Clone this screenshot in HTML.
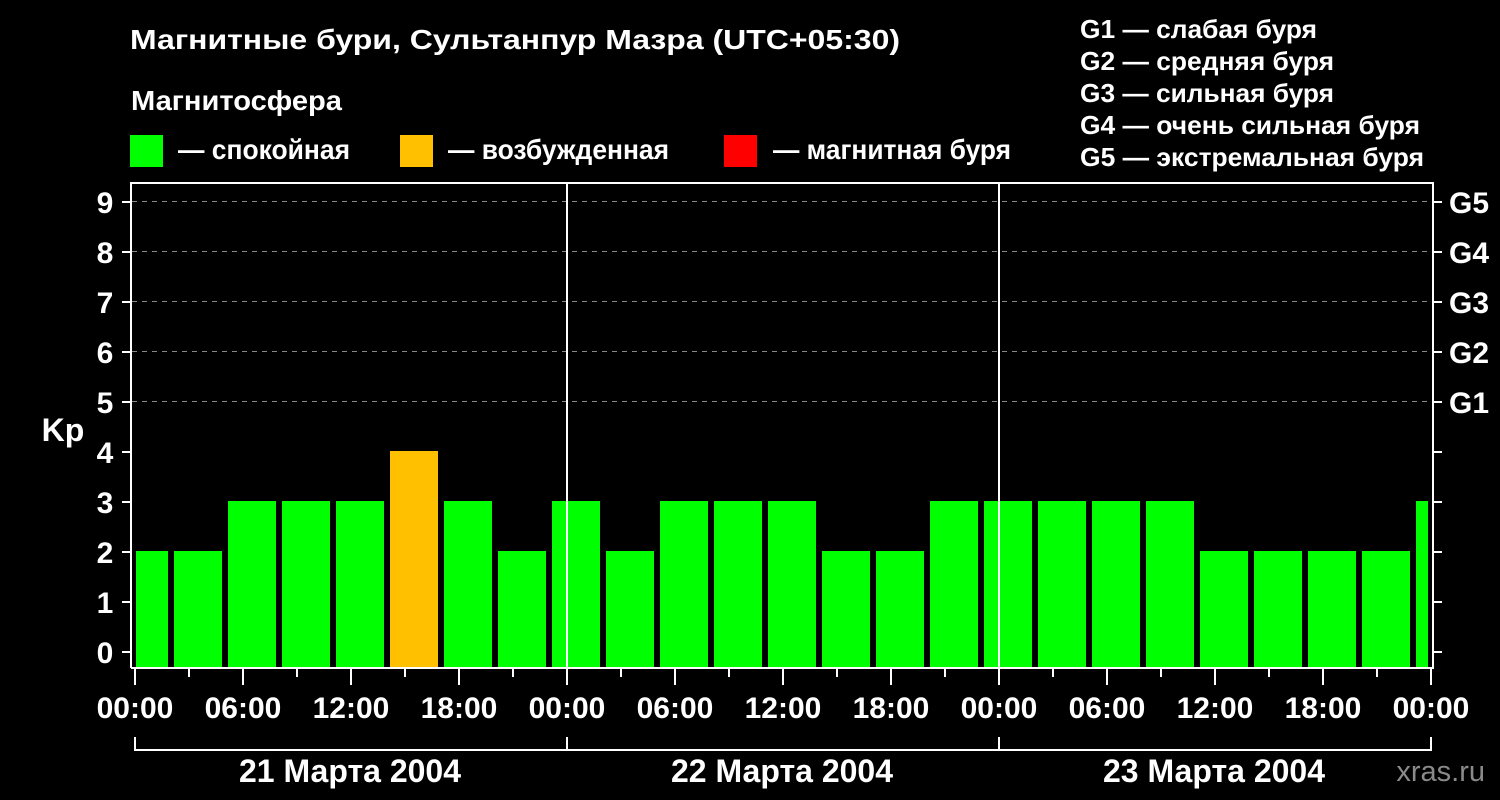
<!DOCTYPE html>
<html><head><meta charset="utf-8"><style>
html,body{margin:0;padding:0;background:#000;width:1500px;height:800px;overflow:hidden}
svg{display:block}
text{font-family:"Liberation Sans",Arial,sans-serif;font-weight:bold;fill:#fff}
</style></head><body>
<svg width="1500" height="800" viewBox="0 0 1500 800" xmlns="http://www.w3.org/2000/svg">
<rect width="1500" height="800" fill="#000"/>
<text x="130" y="49" font-size="28" textLength="770" lengthAdjust="spacingAndGlyphs">Магнитные бури, Сультанпур Мазра (UTC+05:30)</text>
<text x="131" y="110" font-size="28" textLength="211" lengthAdjust="spacingAndGlyphs">Магнитосфера</text>
<rect x="130" y="135" width="33" height="32" fill="#00ff00"/>
<text x="178" y="159" font-size="28" textLength="172" lengthAdjust="spacingAndGlyphs">— спокойная</text>
<rect x="400" y="135" width="33" height="32" fill="#ffc000"/>
<text x="448" y="159" font-size="28" textLength="221" lengthAdjust="spacingAndGlyphs">— возбужденная</text>
<rect x="724" y="135" width="33" height="32" fill="#ff0000"/>
<text x="773" y="159" font-size="28" textLength="238" lengthAdjust="spacingAndGlyphs">— магнитная буря</text>
<g font-size="26">
<text x="1080" y="38" textLength="237" lengthAdjust="spacingAndGlyphs">G1 — слабая буря</text>
<text x="1080" y="70" textLength="254" lengthAdjust="spacingAndGlyphs">G2 — средняя буря</text>
<text x="1080" y="102" textLength="254" lengthAdjust="spacingAndGlyphs">G3 — сильная буря</text>
<text x="1080" y="134" textLength="340" lengthAdjust="spacingAndGlyphs">G4 — очень сильная буря</text>
<text x="1080" y="166" textLength="344" lengthAdjust="spacingAndGlyphs">G5 — экстремальная буря</text>
</g>
<g stroke="#888" stroke-width="1" stroke-dasharray="5,5">
<line x1="132" y1="201.5" x2="1432" y2="201.5"/>
<line x1="132" y1="251.5" x2="1432" y2="251.5"/>
<line x1="132" y1="301.5" x2="1432" y2="301.5"/>
<line x1="132" y1="351.5" x2="1432" y2="351.5"/>
<line x1="132" y1="401.5" x2="1432" y2="401.5"/>
</g>
<g fill="#00ff00">
<rect x="136" y="551" width="32" height="117"/>
<rect x="174" y="551" width="48" height="117"/>
<rect x="228" y="501" width="48" height="167"/>
<rect x="282" y="501" width="48" height="167"/>
<rect x="336" y="501" width="48" height="167"/>
<rect x="390" y="451" width="48" height="217" fill="#ffc000"/>
<rect x="444" y="501" width="48" height="167"/>
<rect x="498" y="551" width="48" height="117"/>
<rect x="552" y="501" width="48" height="167"/>
<rect x="606" y="551" width="48" height="117"/>
<rect x="660" y="501" width="48" height="167"/>
<rect x="714" y="501" width="48" height="167"/>
<rect x="768" y="501" width="48" height="167"/>
<rect x="822" y="551" width="48" height="117"/>
<rect x="876" y="551" width="48" height="117"/>
<rect x="930" y="501" width="48" height="167"/>
<rect x="984" y="501" width="48" height="167"/>
<rect x="1038" y="501" width="48" height="167"/>
<rect x="1092" y="501" width="48" height="167"/>
<rect x="1146" y="501" width="48" height="167"/>
<rect x="1200" y="551" width="48" height="117"/>
<rect x="1254" y="551" width="48" height="117"/>
<rect x="1308" y="551" width="48" height="117"/>
<rect x="1362" y="551" width="48" height="117"/>
<rect x="1416" y="501" width="12" height="167"/>
</g>
<g stroke="#fff" stroke-width="2" fill="none">
<path d="M131 668 V183 H1433 V668 H131"/>
<line x1="567" y1="183" x2="567" y2="668"/>
<line x1="999" y1="183" x2="999" y2="668"/>
</g>
<g stroke="#fff" stroke-width="2">
<path d="M122 652H131M122 602H131M122 552H131M122 502H131M122 452H131M122 402H131M122 352H131M122 302H131M122 252H131M122 202H131"/>
<path d="M1433 652H1442M1433 602H1442M1433 552H1442M1433 502H1442M1433 452H1442M1433 402H1442M1433 352H1442M1433 302H1442M1433 252H1442M1433 202H1442"/>
<path d="M135 669V685M243 669V685M351 669V685M459 669V685M567 669V685M675 669V685M783 669V685M891 669V685M999 669V685M1107 669V685M1215 669V685M1323 669V685M1431 669V685"/>
<path d="M189 669V677M297 669V677M405 669V677M513 669V677M621 669V677M729 669V677M837 669V677M945 669V677M1053 669V677M1161 669V677M1269 669V677M1377 669V677"/>
<path d="M135 737V750H1431V737M567 737V750M999 737V750"/>
</g>
<g font-size="30" text-anchor="middle">
<text x="105" y="663">0</text><text x="105" y="613">1</text><text x="105" y="563">2</text><text x="105" y="513">3</text><text x="105" y="463">4</text><text x="105" y="413">5</text><text x="105" y="363">6</text><text x="105" y="313">7</text><text x="105" y="263">8</text><text x="105" y="213">9</text>
<text x="63" y="441" font-size="32">Kp</text>
</g>
<g font-size="30">
<text x="1449" y="213">G5</text><text x="1449" y="263">G4</text><text x="1449" y="313">G3</text><text x="1449" y="363">G2</text><text x="1449" y="413">G1</text>
</g>
<g font-size="30" text-anchor="middle">
<text x="135" y="718">00:00</text><text x="243" y="718">06:00</text><text x="351" y="718">12:00</text><text x="459" y="718">18:00</text>
<text x="567" y="718">00:00</text><text x="675" y="718">06:00</text><text x="783" y="718">12:00</text><text x="891" y="718">18:00</text>
<text x="999" y="718">00:00</text><text x="1107" y="718">06:00</text><text x="1215" y="718">12:00</text><text x="1323" y="718">18:00</text>
<text x="1431" y="718">00:00</text>
</g>
<g font-size="32" text-anchor="middle">
<text x="350" y="782">21 Марта 2004</text>
<text x="782" y="782">22 Марта 2004</text>
<text x="1214" y="782">23 Марта 2004</text>
</g>
<text x="1485" y="781" font-size="29" text-anchor="end" style="fill:#8a8a8a;font-weight:normal">xras.ru</text>
</svg>
</body></html>
